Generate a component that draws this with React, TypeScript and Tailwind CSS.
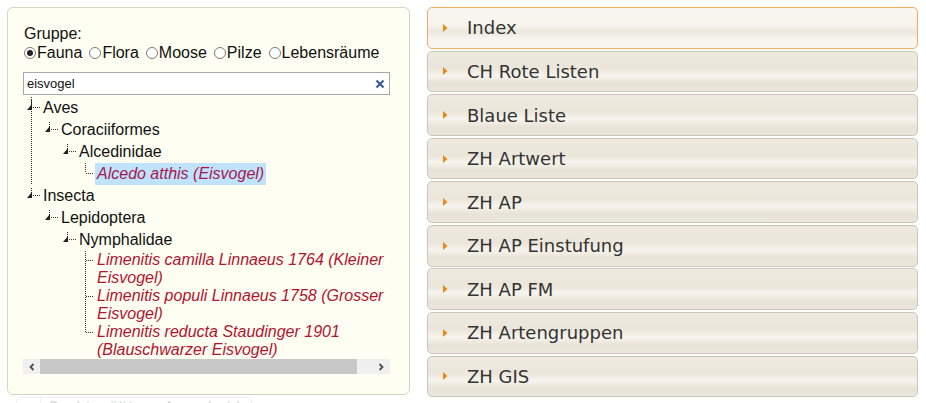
import React from "react";

type TreeNode = {
  label: string;
  leaf?: boolean;
  hl?: boolean;
  children?: TreeNode[];
};

const tree: TreeNode[] = [
  {
    label: "Aves",
    children: [
      {
        label: "Coraciiformes",
        children: [
          {
            label: "Alcedinidae",
            children: [{ label: "Alcedo atthis (Eisvogel)", leaf: true, hl: true }],
          },
        ],
      },
    ],
  },
  {
    label: "Insecta",
    children: [
      {
        label: "Lepidoptera",
        children: [
          {
            label: "Nymphalidae",
            children: [
              { label: "Limenitis camilla Linnaeus 1764 (Kleiner Eisvogel)", leaf: true },
              { label: "Limenitis populi Linnaeus 1758 (Grosser Eisvogel)", leaf: true },
              { label: "Limenitis reducta Staudinger 1901 (Blauschwarzer Eisvogel)", leaf: true },
            ],
          },
        ],
      },
    ],
  },
];

const groups = ["Fauna", "Flora", "Moose", "Pilze", "Lebensräume"];

const sections = [
  "Index",
  "CH Rote Listen",
  "Blaue Liste",
  "ZH Artwert",
  "ZH AP",
  "ZH AP Einstufung",
  "ZH AP FM",
  "ZH Artengruppen",
  "ZH GIS",
];

function OpenIcon() {
  return (
    <svg width="18" height="22" className="shrink-0">
      <line x1="6.5" y1="3" x2="6.5" y2="13" stroke="#222" strokeDasharray="1 1" />
      <polygon points="2,13 7,13 7,7" fill="#222" />
      <line x1="8" y1="10.5" x2="15" y2="10.5" stroke="#333" strokeDasharray="1 1" />
    </svg>
  );
}

function LeafIcon({ y }: { y: number }) {
  return (
    <svg width="18" height={y + 2} className="shrink-0">
      <line x1="6.5" y1="0" x2="6.5" y2={y} stroke="#333" strokeDasharray="1 1" />
      <line x1="7" y1={y + 0.5} x2="15" y2={y + 0.5} stroke="#333" strokeDasharray="1 1" />
    </svg>
  );
}

function Node({ node, last, multi }: { node: TreeNode; last: boolean; multi?: boolean }) {
  const line = !last
    ? "bg-[image:linear-gradient(to_bottom,#333_50%,transparent_50%)] bg-[length:1px_2px] bg-[position:6px_0] bg-repeat-y"
    : "";
  if (node.leaf) {
    return (
      <li className={line}>
        <div className="flex items-start">
          <LeafIcon y={multi ? 9 : 10} />
          {node.hl ? (
            <span className="h-[22px] leading-[22px] px-[2px] -ml-[2px] bg-[#bee3fa] italic text-[#a8184e]">
              {node.label}
            </span>
          ) : (
            <span className="leading-[18px] italic text-[#b1142f]">{node.label}</span>
          )}
        </div>
      </li>
    );
  }
  const kids = node.children ?? [];
  const multiKids = kids.length > 1;
  return (
    <li className={line}>
      <div className="flex items-center h-[22px]">
        <OpenIcon />
        <span className="text-[#111]">{node.label}</span>
      </div>
      <ul className="ml-[18px]">
        {kids.map((k, i) => (
          <Node key={k.label} node={k} last={i === kids.length - 1} multi={multiKids} />
        ))}
      </ul>
    </li>
  );
}

export default function App() {
  return (
    <div className="w-[926px] h-[403px] overflow-hidden bg-white flex gap-[17px] pt-[7px] pl-[7px]">
      <div className="flex flex-col w-[403px] shrink-0">
        <div
          className="h-[388px] shrink-0 bg-[#fefef2] border border-[#d6d4c2] rounded-[6px] pt-[16px] pl-[15px] pr-[19px] text-[16px] text-[#111]"
          style={{ fontFamily: '"Liberation Sans", Arial, sans-serif' }}
        >
          <div className="leading-[19px] pl-[1px]">Gruppe:</div>
          <div className="flex items-center leading-[19px] pl-[1px]">
            {groups.map((g, i) => (
              <label key={g} className="flex items-center mr-[7px]">
                <span className="w-[12px] h-[12px] rounded-full border border-[#7a7a7a] bg-white flex items-center justify-center mr-[1px]">
                  {i === 0 && <span className="w-[6px] h-[6px] rounded-full bg-[#222]" />}
                </span>
                {g}
              </label>
            ))}
          </div>
          <div className="mt-[10px] h-[23px] w-[367px] border border-[#a9a9a9] bg-white flex items-center justify-between pl-[3px] pr-[4px]">
            <span className="text-[13px] text-[#111]">eisvogel</span>
            <svg width="10" height="10" viewBox="0 0 10 10">
              <path d="M1.5 1.5 L8.5 8.5 M8.5 1.5 L1.5 8.5" stroke="#3b5b9a" strokeWidth="2.2" />
            </svg>
          </div>
          <div className="w-[367px] mt-[2px]">
            <ul className="pl-[2px] h-[262px]">
              {tree.map((n, i) => (
                <Node key={n.label} node={n} last={i === tree.length - 1} />
              ))}
            </ul>
            <div className="flex h-[15px] items-stretch">
              <div className="w-[17px] bg-[#f0f0f0] flex items-center justify-center">
                <svg width="8" height="8" viewBox="0 0 8 8">
                  <path d="M5.5 1 L2.5 4 L5.5 7" stroke="#505050" strokeWidth="1.8" fill="none" />
                </svg>
              </div>
              <div className="w-[317px] bg-[#c8c8c8]" />
              <div className="flex-1 bg-[#f0f0f0] flex items-center justify-end pr-[5px]">
                <svg width="8" height="8" viewBox="0 0 8 8">
                  <path d="M2.5 1 L5.5 4 L2.5 7" stroke="#505050" strokeWidth="1.8" fill="none" />
                </svg>
              </div>
            </div>
          </div>
        </div>
        <div
          className="mt-[2px] ml-[9px] w-[236px] h-[22px] shrink-0 border border-[#f0f0f0] rounded-[3px] flex items-center text-[#dcdcdc] text-[15px] whitespace-nowrap overflow-hidden"
          style={{ fontFamily: '"DejaVu Sans", Verdana, sans-serif' }}
        >
          <span className="w-[24px] border-r border-[#f0f0f0] h-full shrink-0" />
          <span className="ml-[8px]">Rechtsgültiges Ausscheiden</span>
        </div>
      </div>

      <div
        className="w-[491px] flex flex-col gap-[1.9px]"
        style={{ fontFamily: '"DejaVu Sans", Verdana, sans-serif' }}
      >
        {sections.map((s, i) => (
          <div
            key={s}
            className={
              "h-[41.7px] shrink-0 rounded-[5px] border flex items-center text-[18px] text-[#333] " +
              (i === 0
                ? "border-[#f3ad66] bg-[linear-gradient(to_bottom,#f8f6f1_0%,#f6f3ec_45%,#ebe7dc_60%,#f7f5f0_76%,#f7f5f0_100%)]"
                : "border-[#ccc6b8] bg-[linear-gradient(to_bottom,#eeeae0_0%,#ebe6da_42%,#f7f4ee_60%,#e8e3d6_80%,#ece7dd_100%)]")
            }
          >
            <svg width="5" height="8" viewBox="0 0 5 8" className="ml-[15px] mr-[19px]">
              <polygon points="0,0 4.5,4 0,8" fill="#e68a1e" />
            </svg>
            <span className="leading-none pt-[1px]">{s}</span>
          </div>
        ))}
      </div>
    </div>
  );
}
